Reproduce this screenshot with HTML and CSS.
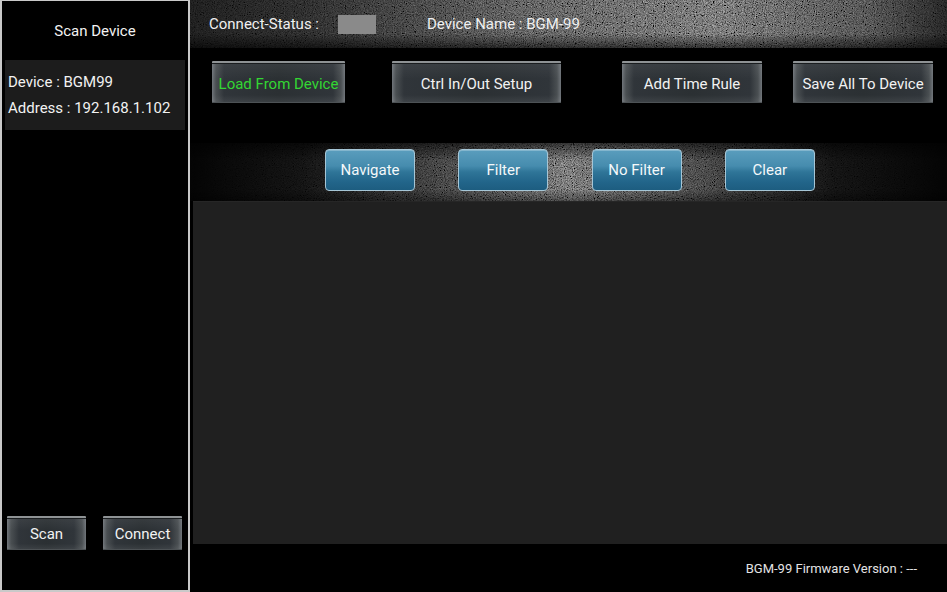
FILE: index.html
```html
<!DOCTYPE html>
<html lang="en">
<head>
<meta charset="utf-8">
<title>BGM-99</title>
<link rel="stylesheet" href="styles.css">
</head>
<body>
<div class="app">
  <aside class="side">
    <div class="side-title">Scan Device</div>
    <div class="dev-info">
      <div class="dev-line">Device : BGM99</div>
      <div class="dev-line">Address : 192.168.1.102</div>
    </div>
    <div class="side-actions">
      <button class="btn gray side-btn">Scan</button>
      <button class="btn gray side-btn">Connect</button>
    </div>
  </aside>
  <main class="main">
    <header class="status-bar textured">
      <svg class="noise" width="100%" height="100%" preserveAspectRatio="none" viewBox="0 0 757 48">
        <defs>
          <filter id="n1" x="0" y="0" width="100%" height="100%">
            <feTurbulence type="fractalNoise" baseFrequency="0.9" numOctaves="3" seed="3"/>
            <feColorMatrix type="matrix" values="0.4 0.4 0.4 0 -0.39  0.4 0.4 0.4 0 -0.39  0.4 0.4 0.4 0 -0.39  0 0 0 0 1"/>
          </filter>
          <linearGradient id="g1" x1="0" y1="0" x2="1" y2="0">
            <stop offset="0" stop-color="#333"/>
            <stop offset="0.15" stop-color="#555"/>
            <stop offset="0.45" stop-color="#ccc"/>
            <stop offset="0.7" stop-color="#fff"/>
            <stop offset="0.9" stop-color="#aaa"/>
            <stop offset="1" stop-color="#444"/>
          </linearGradient>
          <linearGradient id="v1" x1="0" y1="0" x2="0" y2="1">
            <stop offset="0" stop-color="#000" stop-opacity="0"/>
            <stop offset="0.7" stop-color="#000" stop-opacity="0"/>
            <stop offset="1" stop-color="#000" stop-opacity="0.6"/>
          </linearGradient>
          <mask id="m1"><rect width="757" height="48" fill="url(#g1)"/></mask>
        </defs>
        <rect width="757" height="48" fill="#0a0a0a"/>
        <rect width="757" height="48" filter="url(#n1)" mask="url(#m1)"/>
        <rect width="757" height="48" fill="url(#v1)"/>
      </svg>
      <span class="lbl">Connect-Status :</span>
      <span class="status-box"></span>
      <span class="lbl dev-name">Device Name : BGM-99</span>
    </header>
    <div class="actions">
      <button class="btn gray act load">Load From Device</button>
      <button class="btn gray act ctrl">Ctrl In/Out Setup</button>
      <button class="btn gray act rule">Add Time Rule</button>
      <button class="btn gray act save">Save All To Device</button>
    </div>
    <div class="filters textured">
      <svg class="noise" width="100%" height="100%" preserveAspectRatio="none" viewBox="0 0 757 58">
        <defs>
          <filter id="n2" x="0" y="0" width="100%" height="100%">
            <feTurbulence type="fractalNoise" baseFrequency="0.9" numOctaves="3" seed="7"/>
            <feColorMatrix type="matrix" values="0.42 0.42 0.42 0 -0.42  0.42 0.42 0.42 0 -0.42  0.42 0.42 0.42 0 -0.42  0 0 0 0 1"/>
          </filter>
          <linearGradient id="g2" x1="0" y1="0" x2="1" y2="0">
            <stop offset="0" stop-color="#000"/>
            <stop offset="0.15" stop-color="#222"/>
            <stop offset="0.35" stop-color="#999"/>
            <stop offset="0.5" stop-color="#fff"/>
            <stop offset="0.65" stop-color="#aaa"/>
            <stop offset="0.85" stop-color="#222"/>
            <stop offset="1" stop-color="#000"/>
          </linearGradient>
          <linearGradient id="v2" x1="0" y1="0" x2="0" y2="1">
            <stop offset="0" stop-color="#000" stop-opacity="0.6"/>
            <stop offset="0.3" stop-color="#000" stop-opacity="0"/>
            <stop offset="0.8" stop-color="#000" stop-opacity="0"/>
            <stop offset="1" stop-color="#000" stop-opacity="0.4"/>
          </linearGradient>
          <mask id="m2"><rect width="757" height="58" fill="url(#g2)"/></mask>
        </defs>
        <rect width="757" height="58" fill="#050505"/>
        <rect width="757" height="58" filter="url(#n2)" mask="url(#m2)"/>
        <rect width="757" height="58" fill="url(#v2)"/>
      </svg>
      <button class="btn blue">Navigate</button>
      <button class="btn blue">Filter</button>
      <button class="btn blue">No Filter</button>
      <button class="btn blue">Clear</button>
    </div>
    <div class="list"></div>
    <footer class="footer">BGM-99 Firmware Version : ---</footer>
  </main>
</div>
</body>
</html>
```
FILE: styles.css
```css
* { box-sizing: border-box; }
html, body {
  margin: 0;
  padding: 0;
  background: #000;
}
body {
  font-family: Roboto, "Liberation Sans", Arial, sans-serif;
  color: #f2f2f2;
  width: 947px;
  height: 592px;
  overflow: hidden;
}
.app {
  display: flex;
  width: 947px;
  height: 592px;
}
.side {
  width: 190px;
  height: 592px;
  border: 2px solid #c9c9c9;
  border-top-width: 1px;
  display: flex;
  flex-direction: column;
  background: #000;
}
.side-title {
  padding-top: 21px;
  line-height: 18px;
  height: 39px;
  font-size: 15px;
  text-align: center;
}
.dev-info {
  margin: 20px 3px 0 3px;
  height: 70px;
  background: #1c1c1c;
  padding: 9px 0 0 3px;
}
.dev-line {
  font-size: 15px;
  line-height: 26px;
  white-space: nowrap;
}
.side-actions {
  margin-top: auto;
  margin-bottom: 40px;
  padding-left: 5px;
  display: flex;
  gap: 17px;
}
.btn {
  font-family: Roboto, "Liberation Sans", Arial, sans-serif;
  font-size: 15px;
  color: #f2f2f2;
  border: none;
  padding: 0;
  margin: 0;
  cursor: pointer;
  white-space: nowrap;
}
.btn.gray {
  background:
    linear-gradient(to bottom, rgba(255,255,255,0.06), rgba(0,0,0,0) 40%, rgba(0,0,0,0) 80%, rgba(255,255,255,0.08)),
    linear-gradient(to right, #70757a 0, #4a4f52 4px, #30353a 12px, #2b3033 50%, #30353a calc(100% - 12px), #4a4f52 calc(100% - 4px), #70757a 100%);
  border-top: 2px solid #8e9294;
  box-shadow: inset 0 -1px 0 #4d5255, inset 0 1px 0 #1a1d1f;
  border-radius: 1px;
}
.side-btn {
  width: 79px;
  height: 34px;
}
.main {
  width: 757px;
  display: flex;
  flex-direction: column;
}
.textured {
  position: relative;
}
.noise {
  position: absolute;
  left: 0;
  top: 0;
  width: 100%;
  height: 100%;
  z-index: 0;
  display: block;
}
.textured > .lbl,
.textured > .status-box,
.textured > .btn {
  position: relative;
  z-index: 1;
}
.status-bar {
  height: 48px;
  display: flex;
  align-items: center;
  padding-left: 19px;
}
.lbl {
  font-size: 15px;
  white-space: nowrap;
  color: #f0f0f0;
}
.status-box {
  width: 38px;
  height: 19px;
  background: #8a8a8a;
  margin-left: 19px;
}
.dev-name {
  margin-left: 51px;
}
.actions {
  height: 95px;
  display: flex;
  align-items: flex-start;
  padding: 13px 0 0 22px;
}
.act {
  height: 42px;
  padding-top: 1px;
}
.load { width: 133px; color: #33d633; }
.ctrl { width: 169px; margin-left: 47px; }
.rule { width: 140px; margin-left: 61px; }
.save { width: 140px; margin-left: 31px; }
.filters {
  height: 58px;
  display: flex;
  align-items: flex-start;
  padding: 6px 0 0 135px;
  gap: 43.3px;
}
.btn.blue {
  width: 90px;
  height: 42px;
  border: 1px solid #a6c6d6;
  border-radius: 4px;
  background: linear-gradient(to bottom, #5a9dbd 0%, #468cae 40%, #2f7598 55%, #22658a 80%, #1d5d80 100%);
  box-shadow: inset 0 1px 0 rgba(255,255,255,0.25);
  color: #f4f8fa;
}
.list {
  flex: 1;
  margin-left: 3px;
  background: #202020;
  border-top: 1px solid #262626;
}
.footer {
  height: 48px;
  display: flex;
  align-items: center;
  justify-content: flex-end;
  padding-right: 30px;
  font-size: 13px;
  color: #e4e4e4;
}
```
